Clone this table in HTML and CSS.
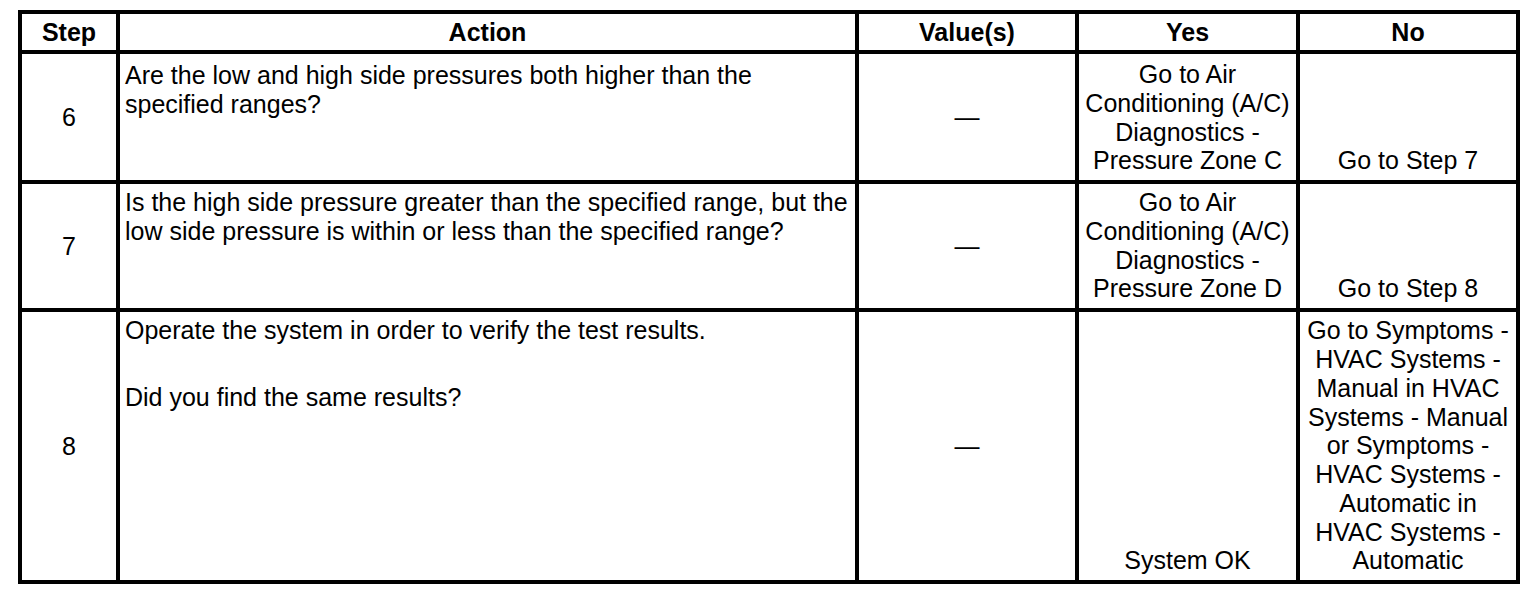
FILE: index.html
```html
<!DOCTYPE html>
<html lang="en">
<head>
<meta charset="utf-8">
<title>Diagnostic Steps</title>
<link rel="stylesheet" href="styles.css">
</head>
<body>
<table class="diag">
  <colgroup>
    <col class="c-step">
    <col class="c-action">
    <col class="c-value">
    <col class="c-yes">
    <col class="c-no">
  </colgroup>
  <thead>
    <tr class="r-head">
      <th>Step</th>
      <th>Action</th>
      <th>Value(s)</th>
      <th>Yes</th>
      <th>No</th>
    </tr>
  </thead>
  <tbody>
    <tr class="r6">
      <td class="step">6</td>
      <td class="action first">Are the low and high side pressures both higher than the<br>specified ranges?</td>
      <td class="value">—</td>
      <td class="yes">Go to Air Conditioning (A/C) Diagnostics - Pressure Zone C</td>
      <td class="no">Go to Step 7</td>
    </tr>
    <tr class="r7">
      <td class="step">7</td>
      <td class="action">Is the high side pressure greater than the specified range, but the<br>low side pressure is within or less than the specified range?</td>
      <td class="value">—</td>
      <td class="yes">Go to Air Conditioning (A/C) Diagnostics - Pressure Zone D</td>
      <td class="no">Go to Step 8</td>
    </tr>
    <tr class="r8">
      <td class="step">8</td>
      <td class="action"><p class="para">Operate the system in order to verify the test results.</p><p class="para">Did you find the same results?</p></td>
      <td class="value">—</td>
      <td class="yes">System OK</td>
      <td class="no">Go to Symptoms -<br>HVAC Systems -<br>Manual in HVAC<br>Systems - Manual<br>or Symptoms -<br>HVAC Systems -<br>Automatic in<br>HVAC Systems -<br>Automatic</td>
    </tr>
  </tbody>
</table>
</body>
</html>
```

FILE: styles.css
```css
html, body {
  margin: 0;
  padding: 0;
  background: #fff;
}

body {
  font-family: "Liberation Sans", Arial, sans-serif;
  font-size: 25px;
  line-height: 28.75px;
  color: #000;
}

.diag {
  border-collapse: collapse;
  margin: 10px 0 0 18px;
  width: 1502px;
  table-layout: fixed;
  border: 4px solid #000;
}

.c-step { width: 98px; }
.c-action { width: 739px; }
.c-value { width: 220px; }
.c-yes { width: 221px; }
.c-no { width: 220px; }

.diag th,
.diag td {
  border: 4px solid #000;
  padding: 4px 5px 5px 5px;
  text-align: center;
}

.diag th {
  font-weight: bold;
  vertical-align: middle;
  padding: 0 5px;
}

.r-head { height: 40px; }
.r6 { height: 130px; }
.r7 { height: 126px; }
.r8 { height: 272px; }

.step,
.value {
  vertical-align: middle;
}

.diag .step,
.diag .value {
  padding-top: 6px;
}

.diag td.action {
  text-align: left;
  vertical-align: top;
  padding-left: 5px;
}

.diag td.action.first {
  padding-top: 7px;
}

.yes,
.no {
  vertical-align: bottom;
}

.para {
  margin: 0 0 38px 0;
}
```
